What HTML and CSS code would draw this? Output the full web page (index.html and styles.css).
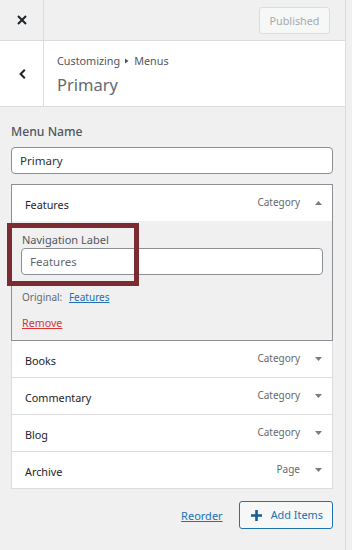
FILE: index.html
```html
<!DOCTYPE html>
<html lang="en">
<head>
<meta charset="utf-8">
<title>Customizing Menus</title>
<link rel="stylesheet" href="styles.css">
</head>
<body>
<div class="panel">
  <div class="topbar">
    <button class="close-btn" aria-label="Close">
      <svg width="10" height="10" viewBox="0 0 10 10"><path d="M1 1 L9 9 M9 1 L1 9" stroke="#1d2327" stroke-width="2"/></svg>
    </button>
    <div class="topbar-actions">
      <button class="published-btn" disabled>Published</button>
    </div>
  </div>

  <div class="section-head">
    <button class="back-btn" aria-label="Back">
      <svg width="7" height="10" viewBox="0 0 7 10"><path d="M5.8 0.8 L1.6 5 L5.8 9.2" fill="none" stroke="#1d2327" stroke-width="2"/></svg>
    </button>
    <div class="section-title">
      <div class="crumbs">Customizing <svg class="crumb-sep" width="4" height="6" viewBox="0 0 4 6"><path d="M0 0.5 L3.5 3 L0 5.5Z" fill="#50575e"/></svg> Menus</div>
      <div class="title">Primary</div>
    </div>
  </div>

  <div class="content">
    <label class="control-title">Menu Name</label>
    <div class="text-input name-input">Primary</div>

    <div class="menu-list">
      <div class="menu-item open">
        <div class="item-bar">
          <span class="item-title">Features</span>
          <span class="item-type">Category</span>
          <svg class="arrow" width="7" height="4" viewBox="0 0 7 4"><path d="M0 4 L3.5 0 L7 4Z" fill="#787c82"/></svg>
        </div>
        <div class="item-settings">
          <div class="highlight"></div>
          <div class="field-label">Navigation Label</div>
          <div class="text-input label-input">Features</div>
          <div class="original">Original: <a href="#" class="link">Features</a></div>
          <div class="remove-row"><a href="#" class="remove">Remove</a></div>
        </div>
      </div>
      <div class="menu-item">
        <div class="item-bar">
          <span class="item-title">Books</span>
          <span class="item-type">Category</span>
          <svg class="arrow" width="7" height="4" viewBox="0 0 7 4"><path d="M0 0 L7 0 L3.5 4Z" fill="#787c82"/></svg>
        </div>
      </div>
      <div class="menu-item">
        <div class="item-bar">
          <span class="item-title">Commentary</span>
          <span class="item-type">Category</span>
          <svg class="arrow" width="7" height="4" viewBox="0 0 7 4"><path d="M0 0 L7 0 L3.5 4Z" fill="#787c82"/></svg>
        </div>
      </div>
      <div class="menu-item">
        <div class="item-bar">
          <span class="item-title">Blog</span>
          <span class="item-type">Category</span>
          <svg class="arrow" width="7" height="4" viewBox="0 0 7 4"><path d="M0 0 L7 0 L3.5 4Z" fill="#787c82"/></svg>
        </div>
      </div>
      <div class="menu-item">
        <div class="item-bar">
          <span class="item-title">Archive</span>
          <span class="item-type">Page</span>
          <svg class="arrow" width="7" height="4" viewBox="0 0 7 4"><path d="M0 0 L7 0 L3.5 4Z" fill="#787c82"/></svg>
        </div>
      </div>
    </div>

    <div class="actions">
      <a href="#" class="link reorder">Reorder</a>
      <button class="add-btn">
        <svg width="11" height="11" viewBox="0 0 11 11"><path d="M5.5 0 V11 M0 5.5 H11" stroke="#135e96" stroke-width="2.6"/></svg>
        <span>Add Items</span>
      </button>
    </div>
  </div>
</div>
</body>
</html>
```

FILE: styles.css
```css
* { box-sizing: border-box; }

html, body {
  margin: 0;
  padding: 0;
  height: 100%;
}

body {
  background: #f0f0f1;
  font-family: "Noto Sans", "Open Sans", sans-serif;
  font-size: 11px;
  color: #1d2327;
}

button {
  font-family: inherit;
  margin: 0;
}

.panel {
  width: 346px;
  min-height: 100%;
  background: #f0f0f1;
  border-right: 1px solid #dcdcde;
}

/* top bar */
.topbar {
  display: flex;
  height: 41px;
  border-bottom: 1px solid #dcdcde;
}

.close-btn,
.back-btn {
  width: 44px;
  flex: 0 0 44px;
  border: 0;
  border-right: 1px solid #dcdcde;
  background: transparent;
  display: flex;
  align-items: center;
  justify-content: center;
  padding: 0 0 0 1px;
}

.topbar-actions {
  flex: 1;
  display: flex;
  align-items: center;
  justify-content: flex-end;
  padding-right: 15px;
}

.published-btn {
  height: 27px;
  width: 71px;
  padding: 0;
  margin-top: 1px;
  border: 1px solid #dcdcde;
  border-radius: 3px;
  background: #f6f7f7;
  color: #a7aaad;
  font-size: 10.8px;
  line-height: 25px;
}

/* section head */
.section-head {
  display: flex;
  height: 66px;
  background: #fff;
  border-bottom: 1px solid #dcdcde;
}

.section-title {
  padding: 12px 10px 0 13px;
  color: #50575e;
}

.crumbs {
  font-size: 10.8px;
  line-height: 16px;
  display: flex;
  align-items: center;
  gap: 5px;
}

.crumb-sep {
  display: block;
}

.title {
  font-size: 16.5px;
  line-height: 24px;
  margin-top: 4px;
  color: #646970;
}

/* content */
.content {
  padding: 16px 12px 20px 11px;
}

.control-title {
  display: block;
  font-size: 12.2px;
  font-weight: 500;
  line-height: 18px;
  color: #50575e;
  margin-bottom: 6px;
}

.text-input {
  height: 27px;
  border: 1px solid #8c8f94;
  border-radius: 4px;
  background: #fff;
  font-size: 11.5px;
  line-height: 25px;
  padding: 0 8px;
  color: #2c3338;
}

.name-input {
  margin-bottom: 10px;
}

/* menu items */
.menu-list {
  display: flex;
  flex-direction: column;
}

.menu-item {
  background: #fff;
  border: 1px solid #dcdcde;
  border-top: 0;
}

.menu-item.open {
  border: 1px solid #8c8f94;
}

.item-bar {
  display: flex;
  align-items: center;
  height: 36px;
  padding: 3px 10px 0 13px;
  background: #fff;
}

.item-title {
  flex: 1;
  font-size: 10.8px;
  line-height: 16px;
  color: #1d2327;
}

.item-type {
  font-size: 10px;
  line-height: 14px;
  color: #646970;
  margin-right: 15px;
  margin-bottom: 5px;
}

.arrow {
  display: block;
  margin-bottom: 3px;
}

.item-settings {
  position: relative;
  background: #f0f0f1;
  padding: 11px 9px 9px 9px;
}

.highlight {
  position: absolute;
  left: -5px;
  top: 2px;
  width: 132px;
  height: 63px;
  border: 5px solid #7a2c32;
  pointer-events: none;
}

.field-label {
  font-size: 11px;
  line-height: 16px;
  color: #50575e;
  padding-left: 1px;
}

.label-input {
  color: #646970;
}

.original {
  margin-top: 14px;
  font-size: 10px;
  line-height: 16px;
  color: #646970;
  padding-left: 1px;
}

.link {
  color: #2271b1;
  text-decoration: underline;
}

.original .link {
  margin-left: 4px;
}

.remove-row {
  margin-top: 10px;
  font-size: 10.7px;
  line-height: 16px;
  padding-left: 1px;
}

.remove {
  color: #d63638;
  text-decoration: underline;
}

/* footer actions */
.actions {
  display: flex;
  justify-content: flex-end;
  align-items: center;
  gap: 16px;
  margin-top: 12px;
}

.reorder {
  font-size: 11px;
  line-height: 16px;
  margin-top: 1px;
}

.add-btn {
  display: flex;
  align-items: center;
  gap: 9px;
  height: 28px;
  padding: 0 9px 0 11px;
  border: 1px solid #2271b1;
  border-radius: 3px;
  background: #f6f7f7;
  color: #2271b1;
  font-size: 10.9px;
  line-height: 16px;
}
```
